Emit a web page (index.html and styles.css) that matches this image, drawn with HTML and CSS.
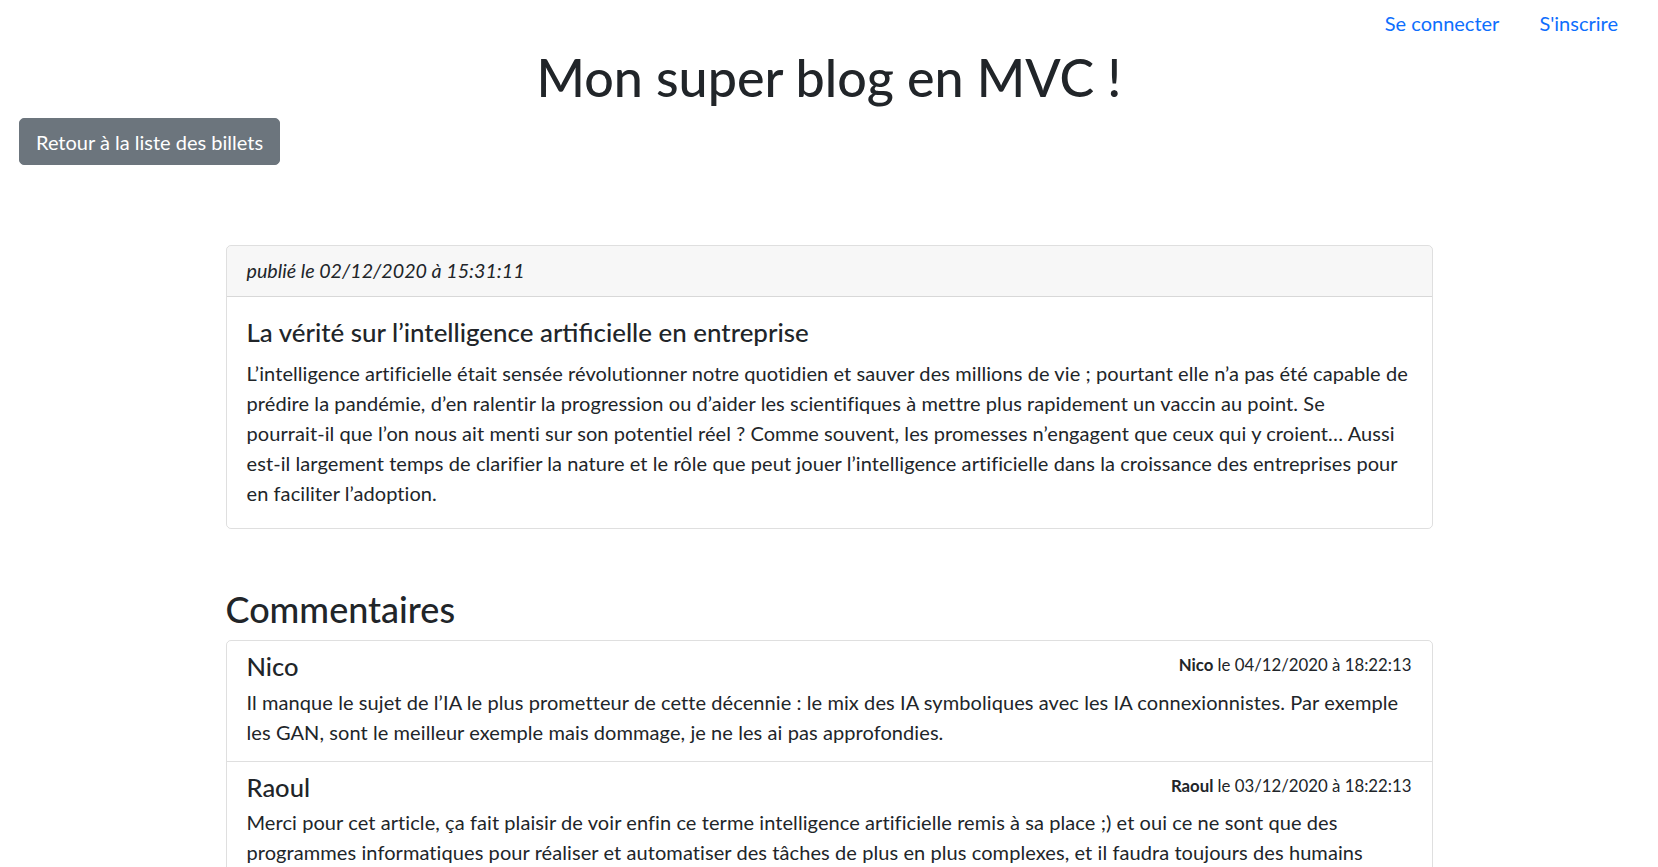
FILE: index.html
```html
<!DOCTYPE html>
<html lang="fr">
<head>
<meta charset="utf-8">
<title>Mon super blog en MVC !</title>
<link rel="stylesheet" href="styles.css">
</head>
<body>
<header class="topbar">
  <ul class="nav">
    <li><a class="nav-link" href="#">Se connecter</a></li>
    <li><a class="nav-link" href="#">S'inscrire</a></li>
  </ul>
</header>
<h1 class="site-title">Mon super blog en MVC !</h1>
<div class="back-row">
  <a class="btn" href="#">Retour à la liste des billets</a>
</div>
<main class="content">
  <article class="card">
    <div class="card-header"><em>publié le 02/12/2020 à 15:31:11</em></div>
    <div class="card-body">
      <h5 class="card-title">La vérité sur l’intelligence artificielle en entreprise</h5>
      <p class="card-text">L’intelligence artificielle était sensée révolutionner notre quotidien et sauver des millions de vie ; pourtant elle n’a pas été capable de prédire la pandémie, d’en ralentir la progression ou d’aider les scientifiques à mettre plus rapidement un vaccin au point. Se <span class="nobr">pourrait-il</span> que l’on nous ait menti sur son potentiel réel ? Comme souvent, les promesses n’engagent que ceux qui y croient… Aussi <span class="nobr">est-il</span> largement temps de clarifier la nature et le rôle que peut jouer l’intelligence artificielle dans la croissance des entreprises pour en faciliter l’adoption.</p>
    </div>
  </article>

  <h3 class="comments-title">Commentaires</h3>
  <ul class="list-group">
    <li class="list-item">
      <div class="item-head">
        <h5 class="item-title">Nico</h5>
        <small class="item-meta"><strong>Nico</strong> le 04/12/2020 à 18:22:13</small>
      </div>
      <p class="item-text">Il manque le sujet de l’IA le plus prometteur de cette décennie : le mix des IA symboliques avec les IA connexionnistes. Par exemple les GAN, sont le meilleur exemple mais dommage, je ne les ai pas approfondies.</p>
    </li>
    <li class="list-item">
      <div class="item-head">
        <h5 class="item-title">Raoul</h5>
        <small class="item-meta"><strong>Raoul</strong> le 03/12/2020 à 18:22:13</small>
      </div>
      <p class="item-text">Merci pour cet article, ça fait plaisir de voir enfin ce terme intelligence artificielle remis à sa place ;) et oui ce ne sont que des programmes informatiques pour réaliser et automatiser des tâches de plus en plus complexes, et il faudra toujours des humains derrière.</p>
    </li>
  </ul>
</main>
</body>
</html>
```
FILE: styles.css
```css
* { box-sizing: border-box; }

body {
  margin: 0;
  font-family: Lato, "Liberation Sans", sans-serif;
  font-size: 20px;
  line-height: 1.5;
  color: #212529;
  background: #fff;
}

.topbar {
  display: flex;
  justify-content: flex-end;
  padding-right: 20px;
}

.nav {
  display: flex;
  list-style: none;
  margin: 0;
  padding: 0;
}

.nav-link {
  display: block;
  padding: 8px 20px;
  color: #0d6efd;
  text-decoration: none;
}

.site-title {
  margin: 0 0 10px;
  font-size: 52px;
  font-weight: 500;
  line-height: 1.2;
  text-align: center;
}

.back-row {
  padding-left: 19px;
}

.btn {
  display: inline-block;
  padding: 7.5px 16px;
  font-size: 20px;
  line-height: 1.5;
  color: #fff;
  background: #6c757d;
  border: 1px solid #6c757d;
  border-radius: 5px;
  text-decoration: none;
}

.content {
  width: 1207px;
  margin: 80px auto 0;
}

.card {
  border: 1px solid rgba(0, 0, 0, 0.125);
  border-radius: 5px;
  overflow: hidden;
}

.card-header {
  padding: 10px 20px;
  background: rgba(0, 0, 0, 0.03);
  border-bottom: 1px solid rgba(0, 0, 0, 0.125);
  font-size: 19.7px;
}

.card-body {
  padding: 20px;
}

.card-title {
  margin: 0 0 10px;
  font-size: 25.9px;
  font-weight: 500;
  line-height: 1.2;
}

.card-text,
.item-text {
  letter-spacing: 0.08px;
}

.card-text {
  margin: 0;
}

.nobr {
  white-space: nowrap;
}

.comments-title {
  margin: 59px 0 9px;
  font-size: 36px;
  font-weight: 500;
  line-height: 1.2;
}

.list-group {
  list-style: none;
  margin: 0;
  padding: 0;
  border: 1px solid rgba(0, 0, 0, 0.125);
  border-radius: 5px;
}

.list-item {
  padding: 10px 20px;
}

.list-item + .list-item {
  border-top: 1px solid rgba(0, 0, 0, 0.125);
}

.item-head {
  display: flex;
  justify-content: space-between;
}

.item-title {
  margin: 0 0 5px;
  font-size: 25.5px;
  font-weight: 500;
  line-height: 1.2;
}

.item-meta {
  padding-top: 1px;
  font-size: 16.8px;
}

.item-meta strong {
  font-weight: 700;
}

.item-text {
  margin: 0 0 4px;
}
```
